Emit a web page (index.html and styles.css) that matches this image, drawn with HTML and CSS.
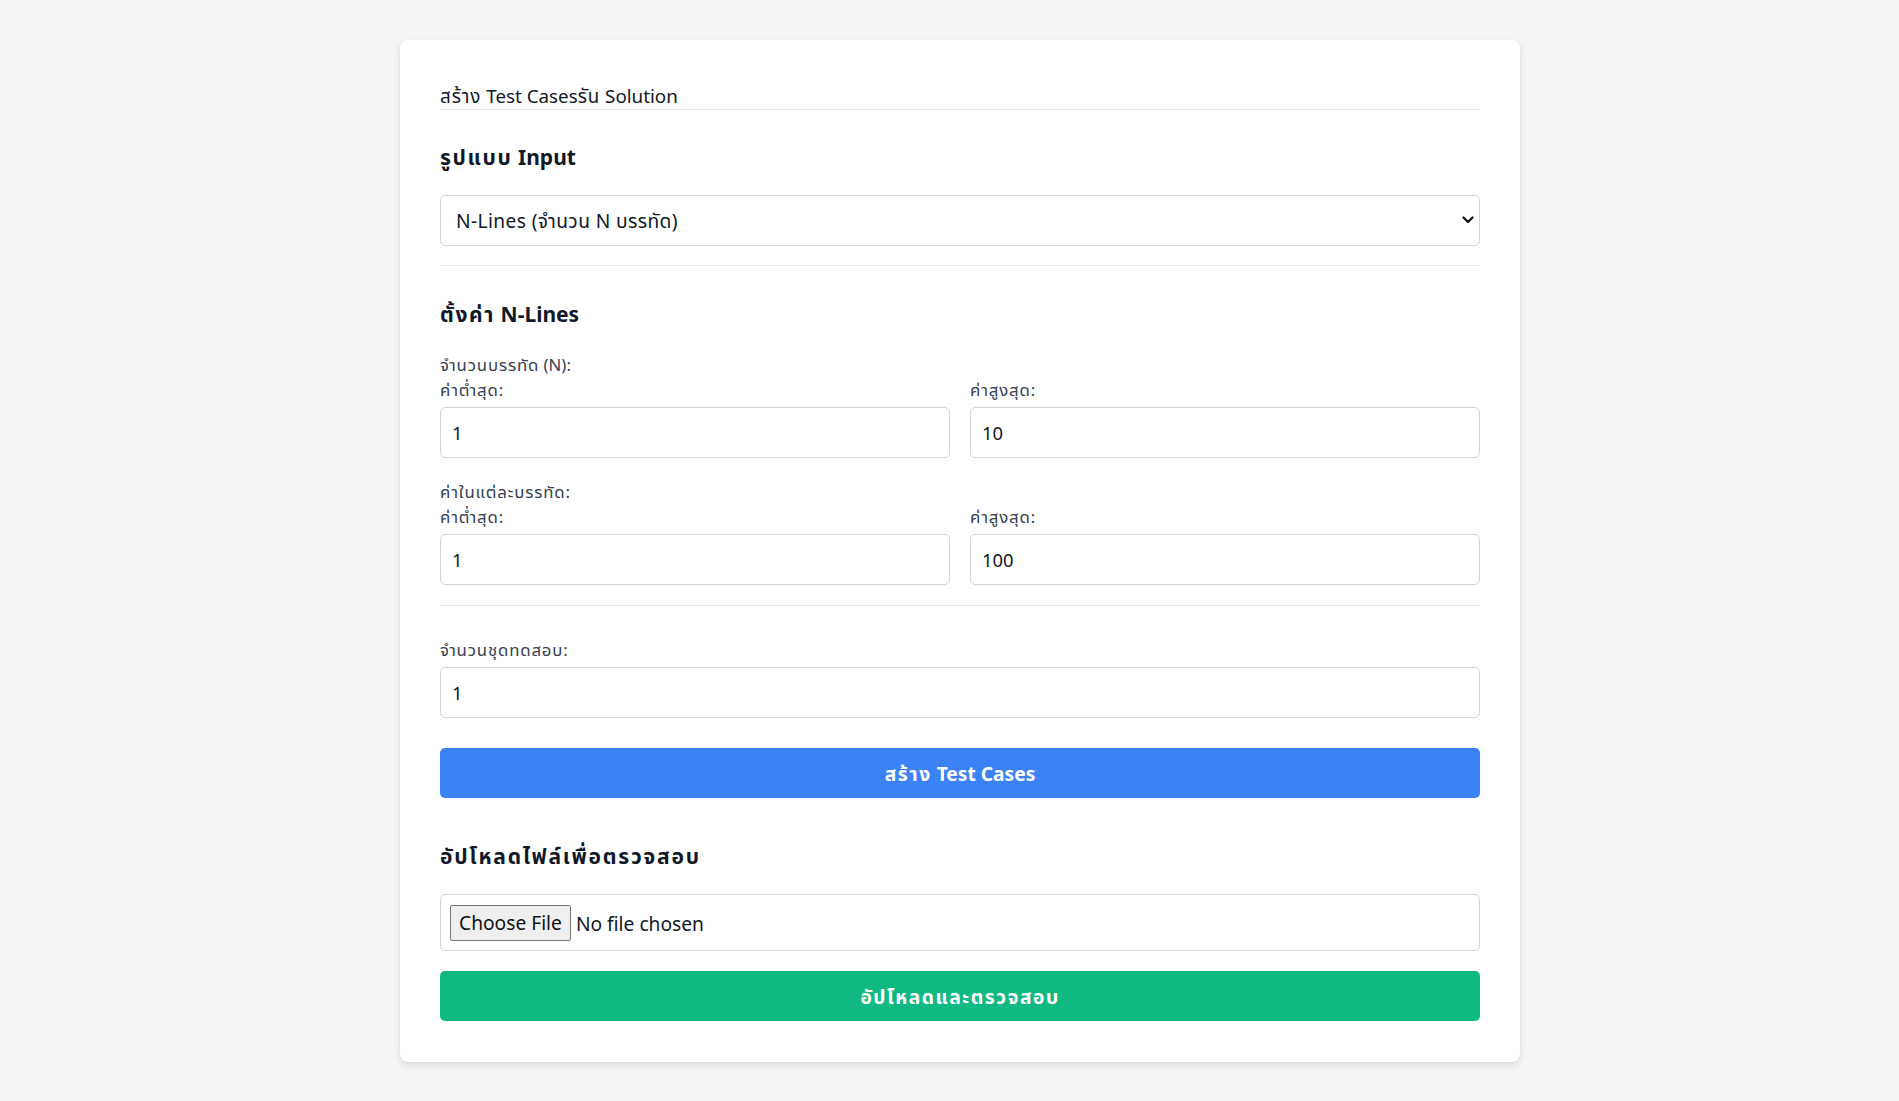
FILE: index.html
```html
<!DOCTYPE html>
<html lang="th">
<head>
<meta charset="utf-8">
<title>Test Case Generator</title>
<link rel="stylesheet" href="styles.css">
</head>
<body>
<div class="page">
  <div class="card">
    <div class="tabs">
      <button class="tab"><span class="th">สร้าง</span> Test Cases</button><button class="tab"><span class="th">รัน</span> Solution</button>
    </div>

    <section class="section bordered">
      <h2 class="heading"><span class="th">รูปแบบ</span> Input</h2>
      <div class="select-wrap">
        <select class="select">
          <option>N-Lines (จำนวน N บรรทัด)</option>
        </select>
        <svg class="chev" width="12" height="8" viewBox="0 0 12 8"><path d="M1.5 1.5 L6 6 L10.5 1.5" fill="none" stroke="#111" stroke-width="2.2" stroke-linecap="round" stroke-linejoin="round"/></svg>
      </div>
    </section>

    <section class="section bordered">
      <h2 class="heading h-second"><span class="th">ตั้งค่า</span> N-Lines</h2>
      <div class="group">
        <div class="label"><span class="th">จำนวนบรรทัด</span> (N):</div>
        <div class="cols">
          <div class="field"><label class="label th">ค่าต่ำสุด:</label><input class="input" type="text" value="1"></div>
          <div class="field"><label class="label th">ค่าสูงสุด:</label><input class="input" type="text" value="10"></div>
        </div>
      </div>
      <div class="group group-next">
        <div class="label th">ค่าในแต่ละบรรทัด:</div>
        <div class="cols">
          <div class="field"><label class="label th">ค่าต่ำสุด:</label><input class="input" type="text" value="1"></div>
          <div class="field"><label class="label th">ค่าสูงสุด:</label><input class="input" type="text" value="100"></div>
        </div>
      </div>
    </section>

    <section class="section">
      <label class="label th count-label">จำนวนชุดทดสอบ:</label>
      <input class="input" type="text" value="1">
      <button class="btn btn-blue"><span class="th">สร้าง</span> Test Cases</button>
    </section>

    <section class="section">
      <h2 class="heading h-upload th">อัปโหลดไฟล์เพื่อตรวจสอบ</h2>
      <div class="filebox"><input class="file" type="file"></div>
      <button class="btn btn-green th">อัปโหลดและตรวจสอบ</button>
    </section>
  </div>
</div>
</body>
</html>
```

FILE: styles.css
```css
* { box-sizing: border-box; }
html, body { margin: 0; padding: 0; }
body {
  background: #f3f4f6;
  font-family: "Noto Sans", "Noto Sans Thai", "Leelawadee UI", sans-serif;
  color: #111827;
  font-size: 19.2px;
}
.th { letter-spacing: 0.05em; }
.heading .th, .btn .th, .btn.th { letter-spacing: 0.08em; }
.heading.th { letter-spacing: 0.085em; }
.page {
  display: flex;
  justify-content: center;
  padding: 40px 19px 40px 40px;
}
.card {
  width: 1120px;
  background: #fff;
  border-radius: 8px;
  box-shadow: 0 4px 8px rgba(0,0,0,0.08), 0 1px 3px rgba(0,0,0,0.06);
  padding: 40px 40px 41px;
  display: flex;
  flex-direction: column;
}
.tabs {
  display: flex;
  padding-top: 3px;
  border-bottom: 1px solid #e5e7eb;
}
.tab {
  background: none;
  border: 0;
  padding: 0;
  margin: 0;
  font: inherit;
  font-size: 18.8px;
  line-height: 26px;
  color: #111827;
}
.section { display: flex; flex-direction: column; }
.bordered { border-bottom: 1px solid #e5e7eb; }
.section.bordered:first-of-type { padding-bottom: 19px; }
.section.bordered + .section.bordered { padding-bottom: 20px; }
.heading {
  margin: 32px 0 0;
  font-size: 21px;
  line-height: 30px;
  font-weight: 700;
  color: #111827;
}
.h-second { margin-top: 33px; }
.h-upload { margin-top: 43px; }
.select-wrap { position: relative; margin-top: 23px; }
.select {
  -webkit-appearance: none;
  appearance: none;
  width: 100%;
  height: 51px;
  border: 1px solid #d1d5db;
  border-radius: 5px;
  background: #fff;
  padding: 0 15px;
  font: inherit;
  font-size: 19.2px;
  letter-spacing: 0.02em;
  color: #111827;
}
.chev { position: absolute; right: 6px; top: 21px; }
.group { margin-top: 24px; }
.group-next { margin-top: 22px; }
.label {
  display: block;
  font-size: 16.8px;
  line-height: 24px;
  color: #374151;
}
.cols {
  display: grid;
  grid-template-columns: 1fr 1fr;
  column-gap: 20px;
  margin-top: 1px;
}
.field { display: flex; flex-direction: column; }
.input {
  margin-top: 5px;
  height: 51px;
  width: 100%;
  border: 1px solid #d1d5db;
  border-radius: 5px;
  padding: 0 11px;
  font: inherit;
  font-size: 18.4px;
  color: #111827;
  background: #fff;
}
.count-label { margin-top: 32px; }
.btn {
  height: 50px;
  width: 100%;
  border: 0;
  border-radius: 5px;
  padding: 4px 0 0;
  color: #fff;
  font: inherit;
  font-size: 19.2px;
  font-weight: 700;
}
.btn-blue { background: #3b82f6; margin-top: 30px; }
.btn-green { background: #10b981; margin-top: 20px; }
.filebox {
  margin-top: 23px;
  height: 57px;
  border: 1px solid #d1d5db;
  border-radius: 5px;
  padding: 0 9px;
  display: flex;
  align-items: center;
}
.file {
  font: inherit;
  font-size: 19.2px;
  color: #111827;
}
.file::file-selector-button {
  font: inherit;
  font-size: 19.2px;
  height: 36px;
  padding: 0 8px;
  margin-right: 5px;
  background: #efefef;
  border: 1px solid #767676;
  border-radius: 2px;
  color: #111;
}
```
